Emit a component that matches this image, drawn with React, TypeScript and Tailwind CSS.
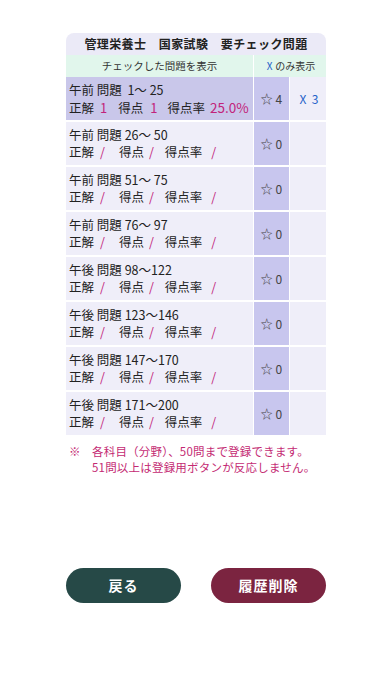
import React from "react";

type Row = { label: string; range: string; correct?: string; score?: string; rate?: string; star: string; x?: string; active?: boolean };

const rows: Row[] = [
  { label: "午前", range: " 1〜 25", correct: "1", score: "1", rate: "25.0%", star: "4", x: "3", active: true },
  { label: "午前", range: "26〜 50", star: "0" },
  { label: "午前", range: "51〜 75", star: "0" },
  { label: "午前", range: "76〜 97", star: "0" },
  { label: "午後", range: "98〜122", star: "0" },
  { label: "午後", range: "123〜146", star: "0" },
  { label: "午後", range: "147〜170", star: "0" },
  { label: "午後", range: "171〜200", star: "0" },
];

export default function App() {
  return (
    <div className="w-[392px] h-[696px] bg-white font-['Noto_Sans_CJK_JP','Noto_Sans',sans-serif] text-[#222]">
      <div className="pt-[33px] w-[260px] ml-[66px]">
        <div className="rounded-t-lg overflow-hidden">
          <div className="h-[22px] bg-[#ebeaf7] flex items-center justify-center text-[12px] leading-[16px] font-bold tracking-[0.4px]">
            管理栄養士　国家試験　要チェック問題
          </div>
          <div className="h-[22px] bg-[#e1f6ec] flex text-[10.5px] leading-[14px]">
            <div className="w-[187px] flex items-center justify-center text-[#333]">チェックした問題を表示</div>
            <div className="w-[1px] bg-white" />
            <div className="flex-1 flex items-center justify-center text-[10px] text-[#333] pl-[2px]">
              <span className="text-[#2563c9] mr-[3px]">X</span>のみ表示
            </div>
          </div>
        </div>
        <div className="flex flex-col gap-[2px]">
          {rows.map((r, i) => (
            <div key={i} className="h-[43px] flex">
              <div className={`w-[187px] pl-[3px] flex flex-col justify-center gap-[1px] ${r.active ? "bg-[#c9c7ea]" : "bg-[#efeef9]"}`}>
                <div className="text-[12.5px] leading-[16px] whitespace-pre">
                  {r.label} 問題 {r.range}
                </div>
                <div className="text-[12.5px] leading-[16px] whitespace-pre">
                  {r.active ? (
                    <>
                      正解<span className="text-[#c2237a] ml-[6px] text-[13px]">{r.correct}</span>
                      <span className="ml-[11px]">得点</span>
                      <span className="text-[#c2237a] ml-[7px] text-[13px]">{r.correct}</span>
                      <span className="ml-[10px]">得点率</span>
                      <span className="text-[#c2237a] ml-[5px] text-[13.5px]">{r.rate}</span>
                    </>
                  ) : (
                    <>
                      正解<span className="text-[#c2237a] ml-[6px]">/</span>
                      <span className="ml-[14px]">得点</span>
                      <span className="text-[#c2237a] ml-[5px]">/</span>
                      <span className="ml-[11px]">得点率</span>
                      <span className="text-[#c2237a] ml-[9px]">/</span>
                    </>
                  )}
                </div>
              </div>
              <div className="w-[1px] bg-white" />
              <div className="w-[35px] bg-[#c8c6ee] flex items-center justify-center text-[12px] text-[#444] whitespace-pre">
                ☆ {r.star}
              </div>
              <div className="w-[1px] bg-white" />
              <div className="flex-1 bg-[#efeef9] flex items-center justify-center text-[12px] text-[#2563c9] whitespace-pre pl-[2px]">
                {r.x ? `X  ${r.x}` : ""}
              </div>
            </div>
          ))}
        </div>
        <div className="mt-[8px] flex text-[11.5px] leading-[16px] text-[#c42a73] tracking-[0.2px]">
          <div className="w-[26px] pl-[3px]">※</div>
          <div>
            各科目（分野）、50問まで登録できます。
            <br />
            51問以上は登録用ボタンが反応しません。
          </div>
        </div>
      </div>
      <div className="mt-[93px] ml-[66px] w-[260px] flex justify-between">
        <button className="w-[115px] h-[35px] rounded-full bg-[#264947] text-white text-[14px] font-bold tracking-[1px]">
          戻る
        </button>
        <button className="w-[115px] h-[35px] rounded-full bg-[#7b2440] text-white text-[14px] font-bold tracking-[1px]">
          履歴削除
        </button>
      </div>
    </div>
  );
}
